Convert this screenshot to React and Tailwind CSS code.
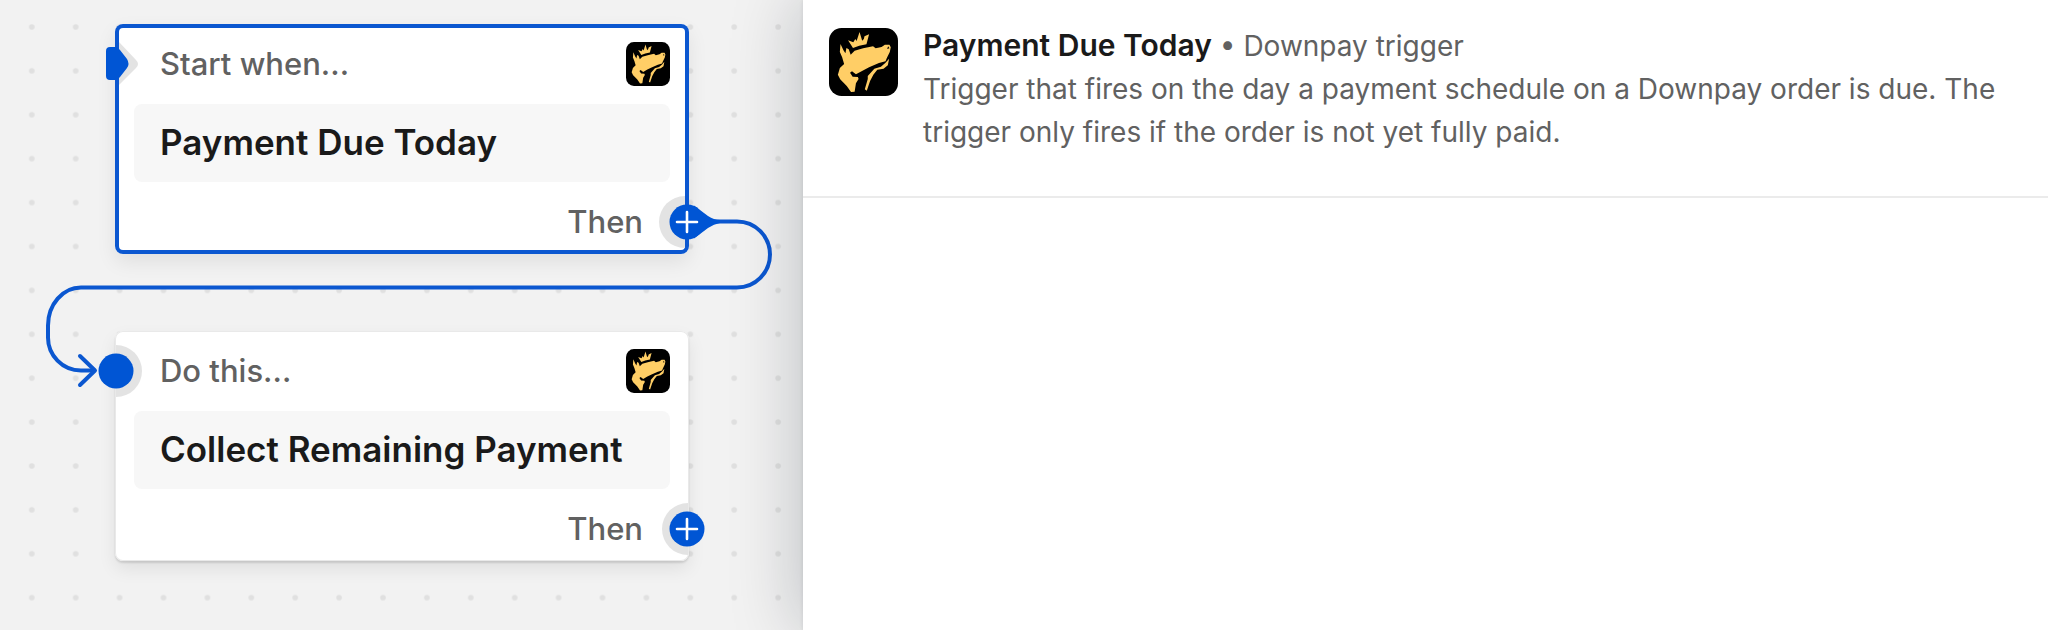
import React from "react";

const steps = [
  { id: "trigger", label: "Start when...", title: "Payment Due Today", kind: "trigger", selected: true },
  { id: "action", label: "Do this...", title: "Collect Remaining Payment", kind: "action", selected: false },
];

function DownpayLogo({ className }) {
  return (
    <svg viewBox="0 0 210 204" className={className} role="img" aria-label="Downpay" preserveAspectRatio="none">
      <rect width="210" height="204" rx="38" fill="#000" />
      <g fill="#ffce66">
        <path d="M58 37 L74 43 L80 33 L84 39 L93 12 L101 38 L106 33 L108 25 L122 19 L114 49 L92 53 L73 60 Z" />
        <path d="M35 48 L44 67 L50 76 L53 60 L60 64 L66 80 L78 68 L104 61 L134 55 L142 61 L160 57 L170 50 L184 50 L188 58 L185 72 L176 90 L172 100 L152 105 L122 118 L102 128 L82 139 L70 130 L64 134 L72 146 L88 147 L90 153 L82 166 L78 191 L67 192 L54 174 L34 154 L27 140 L33 120 L46 108 L40 88 L33 72 Z" />
        <path d="M183 92 L179 112 L166 122 L147 125 L135 140 L125 159 L115 188 L109 184 L118 153 L118 144 L138 122 L158 116 L172 104 Z" />
      </g>
      <path d="M180 55 L184 61 L177 63 Z" fill="#000" />
    </svg>
  );
}

function DotGrid() {
  return (
    <svg className="absolute inset-0 h-full w-full" aria-hidden="true">
      <defs>
        <pattern id="dots" x="9.8" y="5" width="43.9" height="43.9" patternUnits="userSpaceOnUse">
          <circle cx="22" cy="22" r="2.8" fill="#e0e0e0" />
        </pattern>
      </defs>
      <rect width="100%" height="100%" fill="url(#dots)" />
    </svg>
  );
}

function Connector() {
  return (
    <svg
      className="pointer-events-none absolute left-0 top-0"
      width="803"
      height="420"
      fill="none"
      stroke="#0b57d0"
      strokeWidth="4"
      strokeLinecap="round"
      strokeLinejoin="round"
      aria-hidden="true"
    >
      <path d="M714 221.5 H737 A33 33 0 0 1 737 287.5 H81 A33 38 0 0 0 48 325.5 V337 A33 33 0 0 0 81 370.5 H94" />
      <path d="M80 356 L95 370.5 L80 385" />
    </svg>
  );
}

function InputPort({ kind }) {
  if (kind === "trigger") {
    return (
      <svg className="absolute -left-2.5 top-[18px]" width="36" height="44" aria-hidden="true">
        <path d="M14 0 L31 18 Q35 22 31 26 L14 43 Z" fill="#e3e3e3" />
        <path
          d="M5 5 H10 Q13 5 15 8 L22 17 Q25 22 22 26 L15 35 Q13 38 10 38 H5 Q1 38 1 34 V9 Q1 5 5 5 Z"
          fill="#0055d4"
        />
      </svg>
    );
  }

  return (
    <svg className="absolute -left-[25px] top-[14px]" width="52" height="52" aria-hidden="true">
      <path d="M26 0 A26 26 0 0 1 26 52 Z" fill="#e3e3e3" />
      <circle cx="26" cy="26" r="17.5" fill="#0055d4" />
    </svg>
  );
}

function OutputPort({ connected }) {
  return (
    <button
      type="button"
      aria-label="Add step"
      className="absolute -right-6 bottom-[6px] h-[52px] w-[52px] cursor-pointer"
    >
      <svg width="52" height="52" className="overflow-visible" aria-hidden="true">
        <path d={connected ? "M24 0 A26 26 0 0 0 24 52 Z" : "M27 0 A26 26 0 0 0 27 52 Z"} fill="#e3e3e3" />
        {connected ? <path d="M33 9.5 L47 20 Q53 24 59 24 V27 Q53 28 47 32 L33 42.5 Z" fill="#0055d4" /> : null}
        <circle cx="26" cy="26" r="17.5" fill="#0055d4" />
        <path d="M26 16 V36 M16 26 H36" stroke="#fff" strokeWidth="2.6" strokeLinecap="round" />
      </svg>
    </button>
  );
}

function StepCard({ step, className }) {
  return (
    <article
      className={`absolute left-[115px] w-[574px] rounded-lg bg-white ${
        step.selected
          ? "shadow-[inset_0_0_0_4px_#0b57d0,0_8px_20px_rgba(0,0,0,0.08)]"
          : "shadow-[inset_0_0_0_1px_#e9e9e9,0_2px_2px_rgba(0,0,0,0.12),0_8px_18px_rgba(0,0,0,0.08)]"
      } ${className}`}
    >
      <div className="flex items-center justify-between py-[18px] pl-[45px] pr-[19px]">
        <span className="text-[31px] font-medium leading-8 text-[#616161]">{step.label}</span>
        <DownpayLogo className="h-11 w-11" />
      </div>
      <h2 className="mx-[19px] rounded-lg bg-[#f7f7f7] px-[26px] pb-5 pt-[18px] text-[35px] font-semibold leading-10 text-[#1a1a1a]">
        {step.title}
      </h2>
      <p className="pb-4 pl-5 pr-[46px] pt-6 text-right text-[31px] font-medium leading-8 text-[#616161]">Then</p>
      <InputPort kind={step.kind} />
      <OutputPort connected={step.selected} />
    </article>
  );
}

export default function App() {
  return (
    <div className="flex min-h-screen bg-white font-['Inter',sans-serif]">
      <main className="relative w-[803px] shrink-0 overflow-hidden bg-[#f2f2f2]">
        <DotGrid />
        <Connector />
        <StepCard step={steps[0]} className="top-6" />
        <StepCard step={steps[1]} className="top-[331px]" />
      </main>

      <aside className="relative min-w-0 flex-1 bg-white shadow-[0_0_4px_rgba(0,20,30,0.10),-4px_0_64px_rgba(0,20,30,0.22)]">
        <header className="flex items-start gap-[25px] border-b-2 border-[#ebebeb] px-[26px] pb-[42px] pt-6">
          <DownpayLogo className="mt-1 h-[68px] w-[69px] shrink-0" />
          <div className="min-w-0 text-[28px] leading-[43px] text-[#616161]">
            <h1>
              <span className="text-[30px] font-semibold text-[#1a1a1a]">Payment Due Today</span> • Downpay trigger
            </h1>
            <p>
              Trigger that fires on the day a payment schedule on a Downpay order is due. The trigger only fires if the
              order is not yet fully paid.
            </p>
          </div>
        </header>
      </aside>
    </div>
  );
}
